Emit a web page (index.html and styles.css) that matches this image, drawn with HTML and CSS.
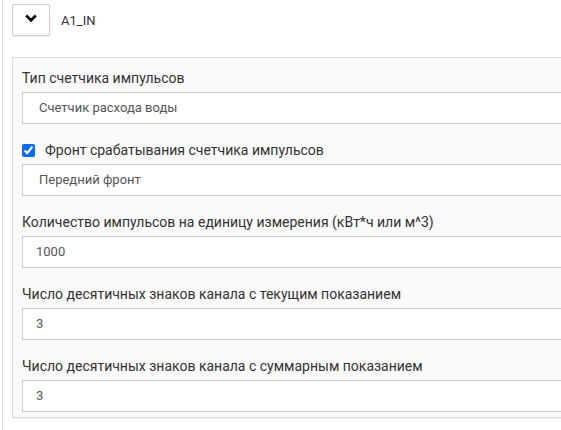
FILE: index.html
```
<!DOCTYPE html>
<html lang="ru">
<head>
<meta charset="utf-8">
<link rel="stylesheet" href="styles.css">
</head>
<body>
<div class="panel">
  <div class="head">
    <button class="toggle" type="button" aria-label="Свернуть">
      <svg width="12" height="9" viewBox="0 0 12 9"><path d="M1.2 1.6 L6 6.2 L10.8 1.6" fill="none" stroke="#111" stroke-width="2.8" stroke-linejoin="miter"/></svg>
    </button>
    <span class="title">A1_IN</span>
  </div>
  <div class="card">
    <div class="field">
      <div class="label">Тип счетчика импульсов</div>
      <div class="control select">Счетчик расхода воды</div>
    </div>
    <div class="field">
      <label class="label check"><input type="checkbox" checked><span>Фронт срабатывания счетчика импульсов</span></label>
      <div class="control select">Передний фронт</div>
    </div>
    <div class="field">
      <div class="label">Количество импульсов на единицу измерения (кВт*ч или м^3)</div>
      <div class="control">1000</div>
    </div>
    <div class="field">
      <div class="label">Число десятичных знаков канала с текущим показанием</div>
      <div class="control">3</div>
    </div>
    <div class="field">
      <div class="label">Число десятичных знаков канала с суммарным показанием</div>
      <div class="control">3</div>
    </div>
  </div>
</div>
</body>
</html>
```
FILE: styles.css
```
html, body {
  margin: 0;
  padding: 0;
  background: #fff;
  overflow: hidden;
}
body {
  font-family: Roboto, "Liberation Sans", sans-serif;
  color: #333;
}
.panel {
  margin-left: 2px;
  border-left: 1px solid #ddd;
  padding: 4px 0 0 9px;
  min-height: 430px;
  box-sizing: border-box;
}
.head {
  display: flex;
  align-items: center;
  height: 32px;
}
.toggle {
  width: 38px;
  height: 32px;
  box-sizing: border-box;
  border: 1px solid #ccc;
  border-radius: 2px;
  background: #fff;
  box-shadow: 0 1px 1px rgba(0,0,0,0.08);
  display: flex;
  align-items: center;
  justify-content: center;
  padding: 0 0 4px 0;
  margin: 0;
}
.title {
  margin-left: 11px;
  font-size: 13px;
  color: #333;
  padding-top: 1px;
}
.card {
  margin-top: 21px;
  border: 1px solid #ddd;
  border-right: none;
  background: #fafafa;
  padding: 10px 0 5px 9px;
  box-shadow: 0 1px 1px rgba(0,0,0,0.04);
}
.field {
  margin-bottom: 16px;
}
.field:last-child {
  margin-bottom: 0;
}
.label {
  font-size: 14px;
  line-height: 20px;
  color: #333;
  margin-bottom: 4px;
  white-space: nowrap;
}
.check {
  display: flex;
  align-items: center;
}
.check input {
  margin: 0 10px 0 0;
  width: 13px;
  height: 13px;
  accent-color: #0b6cf0;
}
.control {
  height: 32px;
  box-sizing: border-box;
  border: 1px solid #ccc;
  border-right: none;
  background: #fff;
  font-size: 13px;
  line-height: 30px;
  color: #555;
  padding: 0 13px;
}
.control.select {
  padding-left: 16px;
}
```
